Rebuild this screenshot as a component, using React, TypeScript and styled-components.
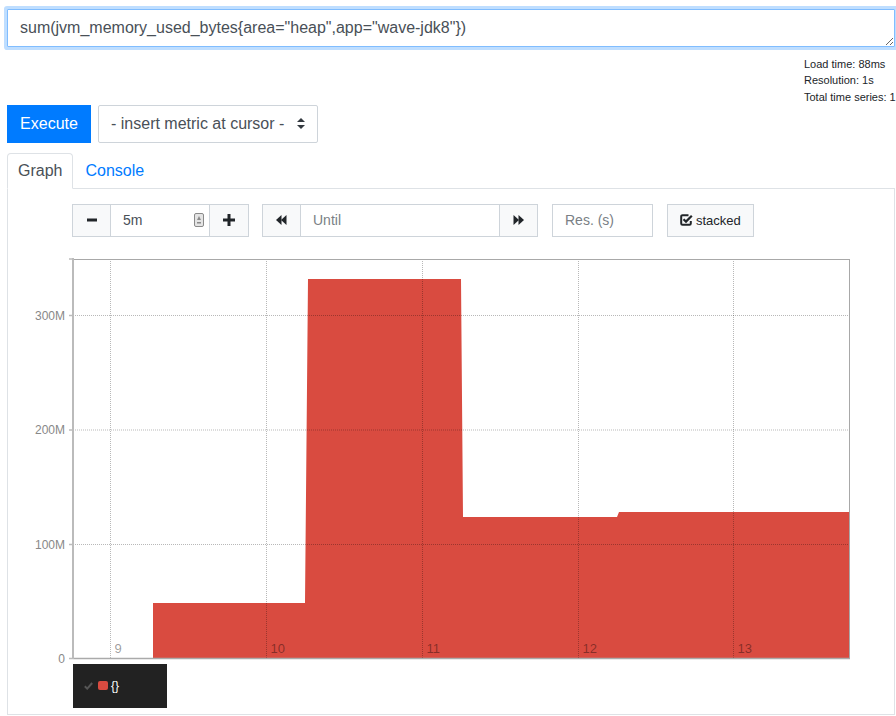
import React from 'react';
import styled, { createGlobalStyle } from 'styled-components';

const Global = createGlobalStyle`
  html, body { margin: 0; padding: 0; background: #fff; overflow: hidden; }
  body { font-family: "Liberation Sans", Arial, sans-serif; color: #212529; }
  * { box-sizing: border-box; }
`;

const Page = styled.div`
  width: 896px;
  padding: 9px 1px 0 7px;
`;

const Query = styled.textarea`
  display: block;
  width: 100%;
  height: 38px;
  margin: 0;
  padding: 6px 12px;
  font: 16px/24px "Liberation Sans", Arial, sans-serif;
  color: #495057;
  border: 1px solid #80bdff;
  border-radius: 1px;
  box-shadow: 0 0 0 3px rgba(0, 123, 255, 0.25);
  outline: none;
  overflow: hidden;
  resize: vertical;
`;

const Stats = styled.div`
  margin: 9px 0 0 auto;
  width: 91px;
  white-space: nowrap;
  font-size: 11px;
  line-height: 16.3px;
  color: #212529;
`;

const ActionRow = styled.div`
  display: flex;
  gap: 7px;
  height: 38px;
`;

const ExecuteButton = styled.button`
  width: 84px;
  height: 38px;
  padding: 0;
  border: 1px solid #007bff;
  background: #007bff;
  color: #fff;
  font: 16px/24px "Liberation Sans", Arial, sans-serif;
  border-radius: 0;
`;

const MetricSelect = styled.div`
  width: 220px;
  height: 38px;
  border: 1px solid #ced4da;
  border-radius: 2px;
  display: flex;
  align-items: center;
  padding: 0 12px;
  justify-content: space-between;
  font-size: 16px;
  color: #495057;
`;

const Tabs = styled.div`
  display: flex;
  align-items: flex-end;
  margin-top: 10px;
  border-bottom: 1px solid #dee2e6;
`;

const Tab = styled.div<{ $active?: boolean }>`
  padding: 5px 10px;
  font-size: 16px;
  line-height: 24px;
  border: 1px solid ${(p) => (p.$active ? '#dee2e6' : 'transparent')};
  border-bottom-color: ${(p) => (p.$active ? '#fff' : 'transparent')};
  border-radius: 4px 4px 0 0;
  margin-bottom: -1px;
  margin-left: ${(p) => (p.$active ? '0' : '1px')};
  background: ${(p) => (p.$active ? '#fff' : 'transparent')};
  color: ${(p) => (p.$active ? '#495057' : '#007bff')};
`;

const Panel = styled.div`
  border: 1px solid #dee2e6;
  border-top: none;
  padding: 15px 0 6px 0;
`;

const Controls = styled.div`
  display: flex;
  align-items: stretch;
  height: 33px;
  margin-left: 64px;
`;

const Group = styled.div<{ $gap?: number }>`
  display: flex;
  margin-left: ${(p) => p.$gap ?? 0}px;
`;

const GroupButton = styled.div<{ $w: number; $first?: boolean }>`
  width: ${(p) => p.$w}px;
  height: 33px;
  margin-left: ${(p) => (p.$first ? 0 : -1)}px;
  background: #f8f9fa;
  border: 1px solid #ced4da;
  display: flex;
  align-items: center;
  justify-content: center;
  color: #212529;
`;

const GroupInput = styled.div<{ $w: number; $pad?: number }>`
  width: ${(p) => p.$w}px;
  height: 33px;
  margin-left: -1px;
  border: 1px solid #ced4da;
  background: #fff;
  display: flex;
  align-items: center;
  justify-content: space-between;
  padding: 0 ${(p) => p.$pad ?? 12}px 0 12px;
  font-size: 14px;
  color: #495057;
`;

const Placeholder = styled.span`
  color: #7a7f85;
  font-size: 14px;
`;

const FieldBox = styled.div<{ $w: number; $gap: number }>`
  width: ${(p) => p.$w}px;
  height: 33px;
  margin-left: ${(p) => p.$gap}px;
  border: 1px solid #ced4da;
  display: flex;
  align-items: center;
  padding-left: 12px;
`;

const StackedButton = styled.div`
  width: 87px;
  height: 33px;
  margin-left: 14px;
  border: 1px solid #ced4da;
  background: #f8f9fa;
  display: flex;
  align-items: center;
  padding-left: 12px;
  gap: 3px;
  font-size: 13px;
  color: #212529;
`;

const Chart = styled.svg`
  display: block;
  margin-top: 13px;
  width: 886px;
  height: 413px;
  overflow: visible;
  font-family: "Liberation Sans", Arial, sans-serif;
`;

const Legend = styled.div`
  position: relative;
  margin: 1px 0 0 65px;
  width: 94px;
  height: 44px;
  background: #222;
  display: flex;
  align-items: center;
  padding-left: 11px;
`;

const Swatch = styled.span`
  display: inline-block;
  width: 10px;
  height: 9px;
  border-radius: 2px;
  background: #d94b40;
  margin-left: 5px;
`;

const LegendLabel = styled.span`
  color: #fff;
  font-size: 12px;
  margin-left: 3px;
`;

const RED = '#d94b40';

const yTicks = [
  { y: 259, label: '' },
  { y: 315.5, label: '300M' },
  { y: 430, label: '200M' },
  { y: 544.5, label: '100M' },
  { y: 658.5, label: '0' },
];
const xTicks = [
  { x: 110.5, label: '9' },
  { x: 266.5, label: '10' },
  { x: 422.5, label: '11' },
  { x: 578.5, label: '12' },
  { x: 733.5, label: '13' },
];

const MinusIcon = () => (
  <svg width="10" height="4" viewBox="0 0 10 4"><rect x="0" y="0.5" width="10" height="3" fill="#212529" /></svg>
);
const PlusIcon = () => (
  <svg width="12" height="12" viewBox="0 0 12 12">
    <rect x="4.5" y="0" width="3" height="12" fill="#212529" />
    <rect x="0" y="4.5" width="12" height="3" fill="#212529" />
  </svg>
);
const BackIcon = () => (
  <svg width="11" height="10" viewBox="0 0 11 10">
    <polygon points="0,5 5.5,0 5.5,10" fill="#212529" />
    <polygon points="5,5 10.5,0 10.5,10" fill="#212529" />
  </svg>
);
const FwdIcon = () => (
  <svg width="11" height="10" viewBox="0 0 11 10">
    <polygon points="11,5 5.5,0 5.5,10" fill="#212529" />
    <polygon points="6,5 0.5,0 0.5,10" fill="#212529" />
  </svg>
);
const CheckSquareIcon = () => (
  <svg width="13" height="12" viewBox="0 0 13 12">
    <path d="M8.5 1.2 H2.5 A1.3 1.3 0 0 0 1.2 2.5 V9.5 A1.3 1.3 0 0 0 2.5 10.8 H9.5 A1.3 1.3 0 0 0 10.8 9.5 V7" fill="none" stroke="#212529" strokeWidth="2" />
    <path d="M3.5 5.2 L6 7.6 L11.8 1.8" fill="none" stroke="#212529" strokeWidth="2.2" />
  </svg>
);
const SpinIcon = () => (
  <svg width="10" height="14" viewBox="0 0 10 14">
    <rect x="0.5" y="0.5" width="9" height="13" rx="1.5" fill="#e4e4e4" stroke="#8a8a8a" />
    <polygon points="5,3 3,7 7,7" fill="#8a8a8a" />
    <rect x="3" y="9" width="4" height="1.5" fill="#8a8a8a" />
  </svg>
);
const UpDown = () => (
  <svg width="8" height="11" viewBox="0 0 8 11">
    <polygon points="4,0 8,4 0,4" fill="#343a40" />
    <polygon points="4,11 8,7 0,7" fill="#343a40" />
  </svg>
);
const TinyCheck = () => (
  <svg width="9" height="8" viewBox="0 0 9 8">
    <path d="M0.8 4.2 L3.2 6.6 L8.2 1" fill="none" stroke="#555" strokeWidth="2" />
  </svg>
);

export default function App() {
  return (
    <>
      <Global />
      <Page>
        <Query defaultValue={'sum(jvm_memory_used_bytes{area="heap",app="wave-jdk8"})'} spellCheck={false} />
        <Stats>
          <div>Load time: 88ms</div>
          <div>Resolution: 1s</div>
          <div>Total time series: 1</div>
        </Stats>
        <ActionRow>
          <ExecuteButton>Execute</ExecuteButton>
          <MetricSelect>
            <span>- insert metric at cursor -</span>
            <UpDown />
          </MetricSelect>
        </ActionRow>
        <Tabs>
          <Tab $active>Graph</Tab>
          <Tab>Console</Tab>
        </Tabs>
        <Panel>
          <Controls>
            <Group>
              <GroupButton $w={39} $first><MinusIcon /></GroupButton>
              <GroupInput $w={100} $pad={5}>
                <span>5m</span>
                <SpinIcon />
              </GroupInput>
              <GroupButton $w={40}><PlusIcon /></GroupButton>
            </Group>
            <Group $gap={13}>
              <GroupButton $w={39} $first><BackIcon /></GroupButton>
              <GroupInput $w={200}><Placeholder>Until</Placeholder></GroupInput>
              <GroupButton $w={39}><FwdIcon /></GroupButton>
            </Group>
            <FieldBox $w={101} $gap={14}><Placeholder>Res. (s)</Placeholder></FieldBox>
            <StackedButton><CheckSquareIcon />stacked</StackedButton>
          </Controls>
          <Chart viewBox="8 250 886 413">
            <path
              d="M153,658 L153,603 L305,603 L308,279 L461,279 L463,517 L617,517 L619,512 L849,512 L849,658 Z"
              fill={RED}
            />
            {yTicks.slice(1, 4).map((t) => (
              <line key={t.label} x1={73} x2={849} y1={t.y} y2={t.y} stroke="rgba(0,0,0,0.28)" strokeDasharray="1 1" />
            ))}
            {xTicks.map((t) => (
              <line key={t.label} x1={t.x} x2={t.x} y1={259} y2={658} stroke="rgba(0,0,0,0.28)" strokeDasharray="1 1" />
            ))}
            <line x1={73} x2={849.5} y1={259.5} y2={259.5} stroke="#a8a8a8" />
            <line x1={849.5} x2={849.5} y1={259} y2={659} stroke="#a8a8a8" />
            <line x1={73} x2={850} y1={658.5} y2={658.5} stroke="#aaa" strokeWidth="1.5" />
            <line x1={73} x2={73} y1={258} y2={659} stroke="#bbb" strokeWidth="2" />
            {yTicks.map((t) => (
              <line key={'t' + t.y} x1={69} x2={73} y1={t.y} y2={t.y} stroke="#bbb" strokeWidth="1.5" />
            ))}
            {yTicks.map((t) =>
              t.label ? (
                <text key={'l' + t.y} x={65} y={t.y + 4} textAnchor="end" fontSize="12" fill="#888">
                  {t.label}
                </text>
              ) : null
            )}
            {xTicks.map((t) => (
              <text key={'x' + t.label} x={t.x + 4} y={653} fontSize="13" fill="rgba(0,0,0,0.4)">
                {t.label}
              </text>
            ))}
          </Chart>
          <Legend>
            <TinyCheck />
            <Swatch />
            <LegendLabel>{'{}'}</LegendLabel>
          </Legend>
        </Panel>
      </Page>
    </>
  );
}
